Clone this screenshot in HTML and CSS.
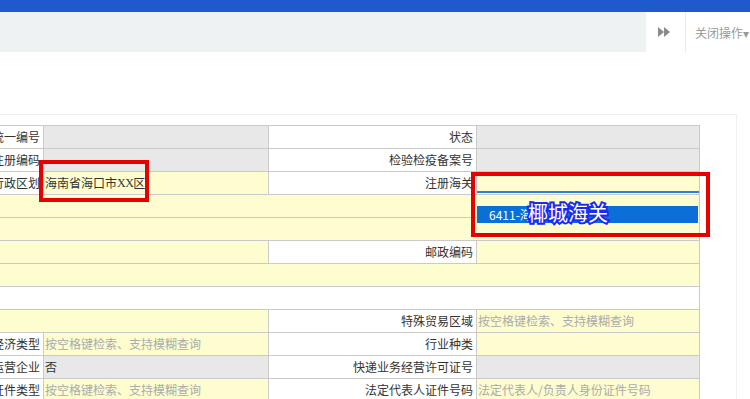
FILE: index.html
```html
<!DOCTYPE html>
<html lang="zh">
<head>
<meta charset="utf-8">
<link rel="stylesheet" href="styles.css">
</head>
<body>
<div class="topbar"></div>
<div class="tabbar">
  <div class="tabs"></div>
  <div class="tab-next">
    <svg width="12" height="10" viewBox="0 0 12 10"><polygon points="0,0 6,5 0,10" fill="#8a8a8a"/><polygon points="6,0 12,5 6,10" fill="#8a8a8a"/></svg>
  </div>
  <div class="tab-close">关闭操作▾</div>
</div>
<div class="panel">
  <div class="grid">
    <div class="c lbl">企业统一编号</div>
    <div class="c gray"></div>
    <div class="c lbl">状态</div>
    <div class="c gray"></div>

    <div class="c lbl">海关注册编码</div>
    <div class="c gray"></div>
    <div class="c lbl">检验检疫备案号</div>
    <div class="c gray"></div>

    <div class="c lbl">行政区划</div>
    <div class="c yellow val">海南省海口市<span class="xx">XX</span>区</div>
    <div class="c lbl">注册海关</div>
    <div class="c yellow input-cell"><div class="input"></div></div>

    <div class="c yellow span4"></div>
    <div class="c yellow span4"></div>

    <div class="c yellow span2"></div>
    <div class="c lbl">邮政编码</div>
    <div class="c yellow"></div>

    <div class="c yellow span4"></div>
    <div class="c white span4"></div>

    <div class="c yellow span2"></div>
    <div class="c lbl">特殊贸易区域</div>
    <div class="c yellow val ph">按空格键检索、支持模糊查询</div>

    <div class="c lbl">企业经济类型</div>
    <div class="c yellow val ph">按空格键检索、支持模糊查询</div>
    <div class="c lbl">行业种类</div>
    <div class="c yellow"></div>

    <div class="c lbl">跨境电商运营企业</div>
    <div class="c gray val">否</div>
    <div class="c lbl">快递业务经营许可证号</div>
    <div class="c gray"></div>

    <div class="c lbl">法定代表人证件类型</div>
    <div class="c yellow val ph">按空格键检索、支持模糊查询</div>
    <div class="c lbl">法定代表人证件号码</div>
    <div class="c yellow val ph">法定代表人/负责人身份证件号码</div>
  </div>
</div>

<div class="dropdown">
  <div class="dd-item">6411-海口海关</div>
  <span class="callout">椰城海关</span>
</div>
<div class="mark mark-1"></div>
<div class="mark mark-2"></div>
</body>
</html>
```

FILE: styles.css
```css
html, body {
  margin: 0;
  padding: 0;
  background: #fff;
  font-family: "Noto Sans CJK SC", "Liberation Sans", sans-serif;
  font-size: 12px;
  color: #333;
  overflow: hidden;
}

.topbar {
  height: 12px;
  background: #2059cd;
}

.tabbar {
  display: flex;
  height: 40px;
}

.tabs {
  width: 646px;
  background: #eff2f3;
}

.tab-next {
  width: 39px;
  display: flex;
  align-items: center;
  justify-content: center;
  padding-right: 3px;
  box-sizing: border-box;
}

.tab-close {
  flex: 1;
  border-left: 1px solid #e8e8e8;
  padding-left: 9px;
  display: flex;
  align-items: center;
  color: #9a9a9a;
  font-size: 12px;
  white-space: nowrap;
  overflow: hidden;
}

.panel {
  margin-top: 62px;
  width: 736px;
  border-top: 1px solid #eeeeee;
  border-right: 1px solid #f0f0f0;
  padding-top: 10px;
  height: 300px;
}

.grid {
  display: grid;
  grid-template-columns: 43px 224px 207px 222px;
  grid-auto-rows: 22px;
  gap: 1px;
  width: 699px;
  padding: 1px 1px 0 0;
  background: #cacaca;
}

.c {
  background: #fff;
  white-space: nowrap;
  overflow: hidden;
  display: flex;
  align-items: center;
  line-height: 22px;
}

.lbl {
  justify-content: flex-end;
  padding-right: 3px;
  background: #fff;
  color: #333;
}

.val {
  padding-left: 1px;
}

.ph {
  color: #ababab;
}

.yellow { background: #fdfdd0; }
.gray { background: #e8e8e8; }
.white { background: #fff; }

.span4 { grid-column: span 4; }
.span2 { grid-column: span 2; }

.xx {
  font-family: "Liberation Serif", serif;
  font-size: 12px;
  letter-spacing: -0.5px;
}

.input-cell {
  align-items: flex-end;
}

.input {
  width: 100%;
  height: 0;
  border-bottom: 2px solid #2f7fd5;
  margin-bottom: 1px;
}

.dropdown {
  position: absolute;
  left: 477px;
  top: 196px;
  width: 222px;
  height: 37px;
  background: #fdfdd0;
  padding-top: 10px;
  box-sizing: border-box;
}

.dd-item {
  height: 17px;
  margin-right: 1px;
  background: #0a6fd7;
  color: #fff;
  line-height: 17px;
  padding-left: 12px;
  font-size: 12px;
  white-space: nowrap;
  overflow: hidden;
}

.callout {
  position: absolute;
  left: 51px;
  top: 5px;
  font-size: 20px;
  font-weight: normal;
  color: #fff;
  line-height: 24px;
  -webkit-text-stroke: 4px #1a2af0;
  paint-order: stroke fill;
}

.mark {
  position: absolute;
  border: 4px solid #e60000;
  box-sizing: border-box;
}

.mark-1 {
  left: 39px;
  top: 160px;
  width: 110px;
  height: 42px;
}

.mark-2 {
  left: 471px;
  top: 172px;
  width: 239px;
  height: 65px;
}
```
